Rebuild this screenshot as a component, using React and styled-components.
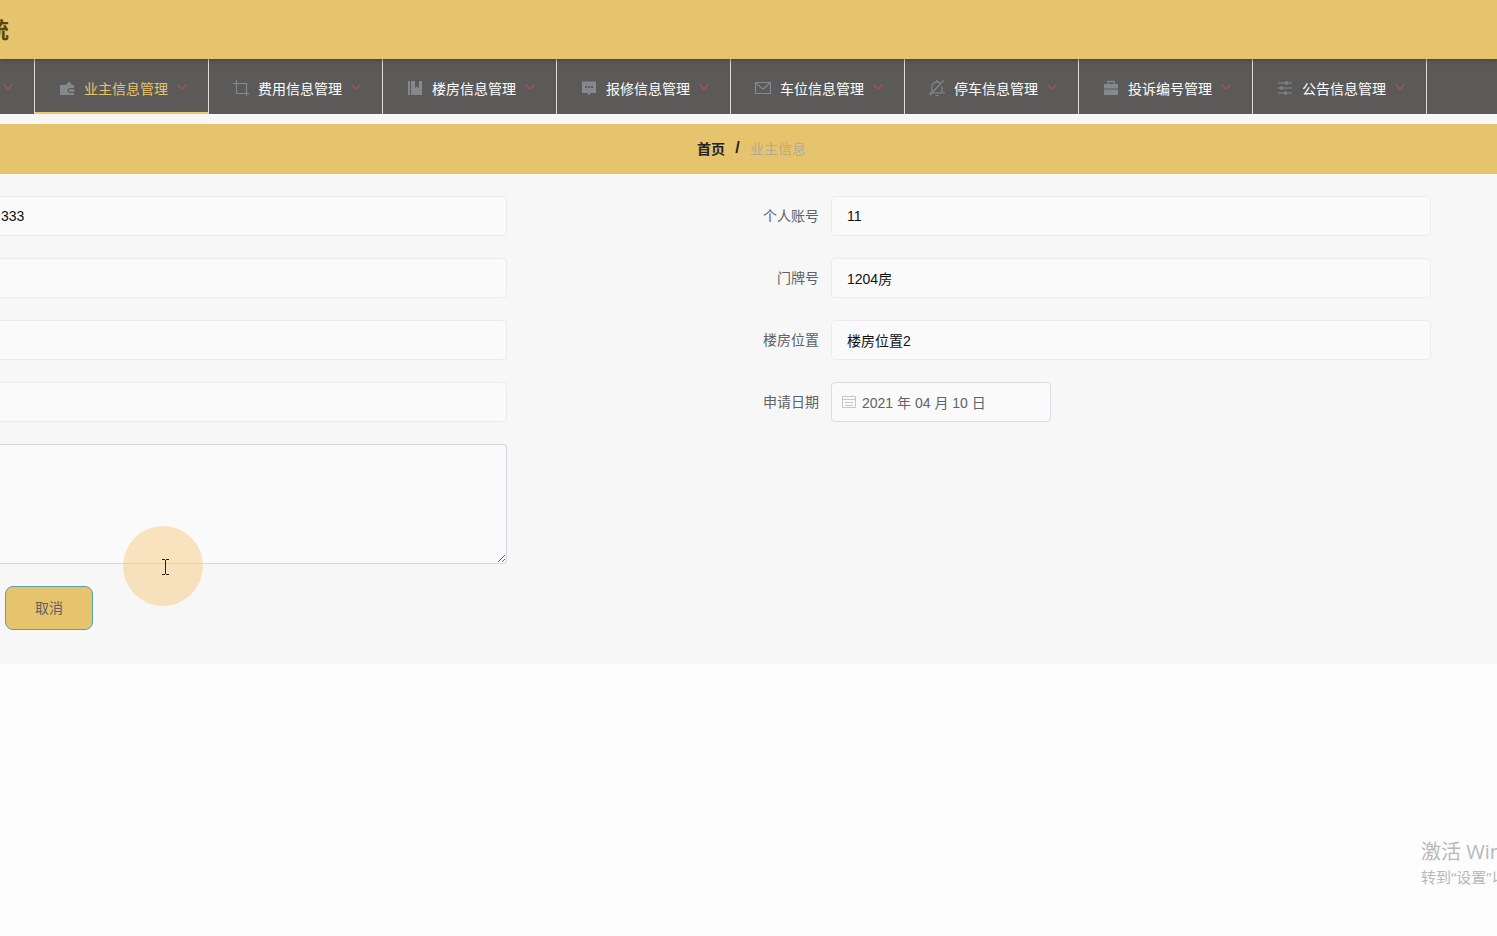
import {useState} from "react";
import styled, {createGlobalStyle} from "styled-components";

const GlobalStyle = createGlobalStyle`
    * {
        box-sizing: border-box;
    }

    body {
        margin: 0;
        background-color: #fdfdfd;
        font-family: "Liberation Sans", "Noto Sans CJK SC", sans-serif;
        font-size: 14px;
        color: #606266;
    }

    button, input, textarea {
        font-family: inherit;
        font-size: 14px;
    }
`;

const Page = styled.div`
    min-height: 100vh;
    overflow: hidden;
`;

const Header = styled.header`
    position: relative;
    display: flex;
    align-items: center;
    height: 59px;
    padding-top: 2px;
    background-color: #e6c46d;
    box-shadow: 0 1px 4px rgba(60, 40, 0, .5);
`;

const Title = styled.h1`
    display: flex;
    justify-content: flex-end;
    width: 9px;
    margin: 0;
    overflow: hidden;
    white-space: nowrap;
    font-size: 22px;
    line-height: 32px;
    color: #5e4608;
`;

const Menu = styled.ul`
    display: flex;
    height: 55px;
    margin: 0;
    padding: 0;
    list-style: none;
    background-color: #5b5a58;
`;

const MenuItem = styled.li`
    display: flex;
    justify-content: flex-end;
    flex: 0 0 auto;
    width: ${p => p.$cut ? "35px" : "auto"};
    overflow: hidden;
    border-right: 1px solid #dcdcdc;
`;

const MenuButton = styled.button`
    display: flex;
    align-items: center;
    padding: 6px 20px 0;
    border: 0;
    border-bottom: 2px solid ${p => p.$active ? "#f0c869" : "transparent"};
    background: none;
    color: ${p => p.$active ? "#e6c46d" : "#fff"};
    line-height: 20px;
    white-space: nowrap;
    cursor: pointer;
`;

const MenuIcon = styled.svg`
    width: 24px;
    height: 18px;
    margin: 0 5px 2px 0;
    color: #85888d;
`;

const Arrow = styled.svg`
    width: 12px;
    height: 12px;
    margin: 0 0 4px 8px;
`;

const Content = styled.main`
    padding-top: 10px;
    background-color: #f7f7f7;
`;

const Breadcrumb = styled.nav`
    display: flex;
    align-items: center;
    justify-content: center;
    height: 50px;
    padding: 0 0 2px 6px;
    background-color: #e6c46d;
`;

const HomeLink = styled.a`
    color: #222;
    font-weight: 700;
    text-decoration: none;
`;

const Separator = styled.span`
    width: 7px;
    margin: 0 9px;
    color: #222;
    font-size: 16px;
    font-weight: 700;
    text-align: center;
`;

const Current = styled.span`
    color: #b3ab91;
`;

const Form = styled.form`
    display: grid;
    grid-template-columns: 507fr 924fr;
    padding: 22px 66px 34px 0;
`;

const Column = styled.div`
    display: flex;
    flex-direction: column;
    gap: 22px;
`;

const Row = styled.div`
    display: flex;
    justify-content: flex-end;
`;

const ButtonRow = styled.div`
    display: flex;
    padding-left: 5px;
`;

const Label = styled.label`
    padding-right: 12px;
    line-height: 40px;
`;

const Input = styled.input`
    width: 65%;
    max-width: 600px;
    height: 40px;
    padding: 0 15px;
    border: 1px solid #ececee;
    border-radius: 4px;
    background-color: #fafafa;
    color: #111;
    outline: 0;
`;

const OpenInput = styled(Input)`
    width: 100%;
    padding: 0 15px 0 1px;
    border-left: 0;
    border-radius: 0 4px 4px 0;
`;

const DateSlot = styled.div`
    width: 65%;
    max-width: 600px;
`;

const DateBox = styled.div`
    display: flex;
    align-items: center;
    width: 220px;
    height: 40px;
    padding-left: 10px;
    border: 1px solid #dcdde0;
    border-radius: 4px;
    background-color: #fafafa;
`;

const CalendarIcon = styled.svg`
    flex: none;
    width: 14px;
    height: 14px;
    margin-right: 6px;
`;

const DateInput = styled.input`
    flex: 1;
    min-width: 0;
    padding: 0;
    border: 0;
    outline: 0;
    background: none;
    color: #606266;
`;

const TextArea = styled.textarea`
    display: block;
    width: 100%;
    height: 120px;
    padding: 5px 15px;
    border: 1px solid #d5d7db;
    border-left: 0;
    border-radius: 0 4px 4px 0;
    background-color: #fafafa;
    outline: 0;
`;

const CancelButton = styled.button`
    width: 88px;
    height: 44px;
    padding: 0 0 2px;
    border: 1px solid #5a9fae;
    border-radius: 8px;
    background-color: #e6c46d;
    color: #606266;
    cursor: pointer;
`;

const Pointer = styled.div`
    position: absolute;
    top: 526px;
    left: 123px;
    width: 80px;
    height: 80px;
    border-radius: 50%;
    background-color: rgba(248, 203, 130, .5);
    pointer-events: none;
`;

const Watermark = styled.div`
    position: absolute;
    right: 0;
    bottom: 48px;
    width: 76px;
    overflow: hidden;
    color: #b8b8b8;
    font-family: "Open Sans", "Noto Sans CJK SC", sans-serif;
    font-size: 15px;
    line-height: 22px;
    white-space: nowrap;
    pointer-events: none;
`;

const WatermarkTitle = styled.div`
    font-size: 20px;
    line-height: 28px;
`;

const icons = {
    wallet: <g fill="currentColor">
        <path d="M2 6h5.5l4-3.5L14 6h2v3h-4a2.5 2.5 0 0 0 0 5h4v2H2z"/>
        <path d="M12 10.3h4.5v2.4H12a1.2 1.2 0 0 1 0-2.4z"/>
    </g>,
    crop: <path d="M4.5 1v13.5H17M1 4.5h13.5V17" fill="none" stroke="currentColor" strokeWidth="1.2"/>,
    book: <path d="M2 2h2v14H2zM5 2h4v7l2-1.6L13 9V2h3v14H5z" fill="currentColor"/>,
    chat: <g>
        <path d="M2 2.5h14V14h-5l-2.5 2.5L7.5 14H2z" fill="currentColor"/>
        <path d="M5 7h2v2H5zM8 7h2v2H8zM11 7h2v2h-2z" fill="#5b5a58"/>
    </g>,
    mail: <path d="M1.5 3.5h15v11h-15zM2 4l5.8 5.2a1.8 1.8 0 0 0 2.4 0L16 4" fill="none" stroke="currentColor"
                strokeWidth="1.2"/>,
    bell: <path d="M4 13V8a5 5 0 0 1 8-4M14 7v7H5M9 1v2M1 14h2M15 14h2M7.5 16.5h3M2 16 15.5 1.5" fill="none"
                stroke="currentColor" strokeWidth="1.2"/>,
    briefcase: <g>
        <path d="M6 5V2.5h6V5" fill="none" stroke="currentColor" strokeWidth="1.4"/>
        <path d="M2 5h14v4.5H2zM2 10.5h14V16H2z" fill="currentColor"/>
    </g>,
    sliders: <g fill="none" stroke="currentColor" strokeWidth="1.2">
        <path d="M2 4h7M12 4h4M2 9h2M7 9h9M2 14h6M11 14h5"/>
        <circle cx="10.5" cy="4" r="1.2"/>
        <circle cx="5.5" cy="9" r="1.2"/>
        <circle cx="9.5" cy="14" r="1.2"/>
    </g>
};

const menu = [
    {icon: "wallet", title: "业主信息管理"},
    {icon: "crop", title: "费用信息管理"},
    {icon: "book", title: "楼房信息管理"},
    {icon: "chat", title: "报修信息管理"},
    {icon: "mail", title: "车位信息管理"},
    {icon: "bell", title: "停车信息管理"},
    {icon: "briefcase", title: "投诉编号管理"},
    {icon: "sliders", title: "公告信息管理"}
];

const ArrowIcon = () => (
    <Arrow viewBox="0 0 12 12" aria-hidden="true">
        <path d="M1.5 3.5 6 8l4.5-4.5" fill="none" stroke="#b04c62" strokeWidth="1.3"/>
    </Arrow>
);

const App = () => {
    const [active, setActive] = useState(0);

    const menuRender = menu.map((m, i) => (
        <MenuItem key={m.title}>
            <MenuButton type="button" $active={i === active} onClick={() => setActive(i)}>
                <MenuIcon viewBox="0 0 18 18" aria-hidden="true">{icons[m.icon]}</MenuIcon>
                {m.title}
                <ArrowIcon/>
            </MenuButton>
        </MenuItem>
    ));

    return (
        <Page>
            <GlobalStyle/>
            <Header><Title>统</Title></Header>
            <Menu>
                <MenuItem $cut>
                    <MenuButton type="button" aria-label="展开"><ArrowIcon/></MenuButton>
                </MenuItem>
                {menuRender}
            </Menu>
            <Content>
                <Breadcrumb>
                    <HomeLink href="#">首页</HomeLink>
                    <Separator>/</Separator>
                    <Current>业主信息</Current>
                </Breadcrumb>
                <Form>
                    <Column>
                        <OpenInput aria-label="编号" defaultValue="333" readOnly/>
                        <OpenInput aria-label="姓名" readOnly/>
                        <OpenInput aria-label="电话" readOnly/>
                        <OpenInput aria-label="地址" readOnly/>
                        <TextArea aria-label="备注"/>
                        <ButtonRow>
                            <CancelButton type="button">取消</CancelButton>
                        </ButtonRow>
                    </Column>
                    <Column>
                        <Row>
                            <Label htmlFor="account">个人账号</Label>
                            <Input id="account" defaultValue="11" readOnly/>
                        </Row>
                        <Row>
                            <Label htmlFor="door">门牌号</Label>
                            <Input id="door" defaultValue="1204房" readOnly/>
                        </Row>
                        <Row>
                            <Label htmlFor="building">楼房位置</Label>
                            <Input id="building" defaultValue="楼房位置2" readOnly/>
                        </Row>
                        <Row>
                            <Label htmlFor="date">申请日期</Label>
                            <DateSlot>
                                <DateBox>
                                    <CalendarIcon viewBox="0 0 14 14" aria-hidden="true">
                                        <path d="M.5 1.5h13v11H.5zM.5 4.5h13M3.5 .5V2M10.5 .5V2M3 7.5h8M3 10.5h8"
                                              fill="none" stroke="#c4c7ce"/>
                                    </CalendarIcon>
                                    <DateInput id="date" defaultValue="2021 年 04 月 10 日"/>
                                </DateBox>
                            </DateSlot>
                        </Row>
                    </Column>
                </Form>
            </Content>
            <Pointer>
                <svg width="80" height="80" viewBox="0 0 80 80" aria-hidden="true">
                    <path d="M39 33.5h3M43 33.5h3M42.5 34v14M39 48.5h3M43 48.5h3" fill="none" stroke="#222"/>
                </svg>
            </Pointer>
            <Watermark>
                <WatermarkTitle>激活 Windows</WatermarkTitle>
                转到“设置”以激活 Windows。
            </Watermark>
        </Page>
    );
};

export default App;
